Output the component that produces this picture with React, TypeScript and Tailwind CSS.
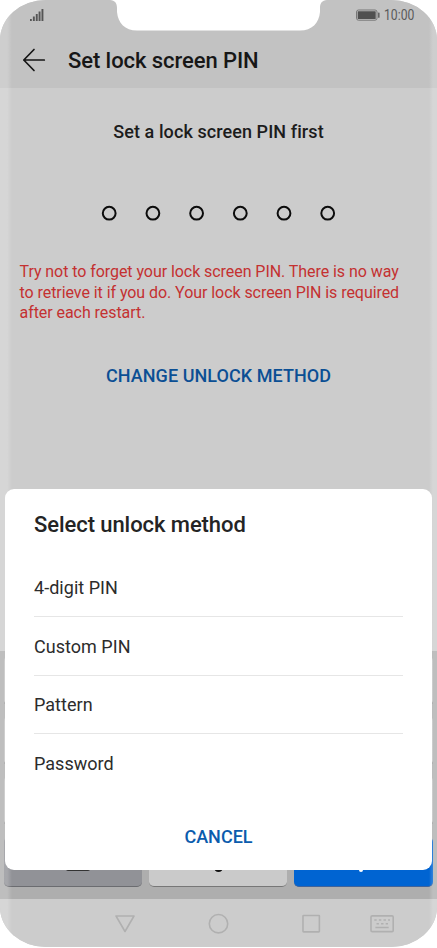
const METHODS = ['4-digit PIN', 'Custom PIN', 'Pattern', 'Password'];

function Notch() {
  return (
    <svg className="absolute left-0 top-0 z-30" width="437" height="40" viewBox="0 0 437 40" fill="#fff">
      <path d="M110 0C115 .4 117 3 117 8V12C118 23 125 30.5 137 30.5H300C312 30.5 319 23 320 12V8C320 3 322 .4 327 0Z" />
    </svg>
  );
}

function StatusBar() {
  return (
    <div className="flex h-[31px] items-start justify-between pl-[30px] pr-[22px]">
      <svg className="mt-[9px]" width="14" height="12" viewBox="0 0 14 12" fill="#555">
        <rect x="0" y="10" width="1.8" height="2" />
        <rect x="2.9" y="7.5" width="1.9" height="4.5" />
        <rect x="5.8" y="5" width="1.9" height="7" />
        <rect x="8.6" y="2.5" width="1.9" height="9.5" />
        <rect x="11.5" y="0" width="1.9" height="12" />
      </svg>
      <div className="flex items-start">
        <svg className="mt-[9px]" width="25" height="13" viewBox="0 0 25 13">
          <rect x=".5" y="1" width="20.5" height="10.2" rx="2" fill="none" stroke="#777" />
          <rect x="1.7" y="2.2" width="18" height="7.8" rx=".6" fill="#505050" />
          <rect x="22" y="3.4" width="1.6" height="5.4" rx=".6" fill="#666" />
        </svg>
        <span className="ml-[3px] mt-[7px] w-[31px] origin-left scale-x-[0.87] whitespace-nowrap text-[14px] leading-[17px] text-[#5a5a5a]">
          10:00
        </span>
      </div>
    </div>
  );
}

function Header() {
  return (
    <header className="h-[88px] shrink-0 bg-[#c2c2c2]">
      <StatusBar />
      <div className="flex h-[57px] items-center pl-[22px] pt-[2px]">
        <svg width="24" height="24" viewBox="0 0 24 24" className="mb-[1px]" fill="none" stroke="#161616" strokeWidth="1.7">
          <path d="M12 1.5L1.8 12L12 22.5M1.8 12H22.3" strokeLinecap="round" strokeLinejoin="round" />
        </svg>
        <h1 className="ml-[22px] whitespace-nowrap text-[22px] font-medium leading-[28px] tracking-[-0.07px] text-[#171717]">
          Set lock screen PIN
        </h1>
      </div>
    </header>
  );
}

function PinDots() {
  return (
    <svg className="mt-[60px]" width="236" height="17" viewBox="0 0 236 17" fill="none" stroke="#0c0c0c" strokeWidth="2">
      {[0, 1, 2, 3, 4, 5].map((digit) => (
        <circle key={digit} cx={8.2 + digit * 43.7} cy="8.2" r="6.4" />
      ))}
    </svg>
  );
}

function Keyboard() {
  return (
    <div className="flex h-[248px] shrink-0 flex-col gap-[12px] bg-[#aeaeae] px-1 pt-[6px]">
      {[0, 1, 2].map((row) => (
        <div key={row} className="grid h-[48px] grid-cols-3 gap-[7px]">
          {[0, 1, 2].map((col) => (
            <div key={col} className="rounded-[4px] border-b border-[#777] bg-[#c2c2c2]" />
          ))}
        </div>
      ))}
      <div className="grid h-[50px] grid-cols-[138px_138px_139px] gap-[7px]">
        <div className="flex items-end justify-center rounded-[5px] border-b border-[#6b6c70] bg-[#919297] pb-[15px] pl-[9px]">
          <div className="h-[5px] w-[24px] rounded-[2px] bg-[#333]" />
        </div>
        <div className="flex items-end justify-center rounded-[5px] border-b border-[#777] bg-[#cacaca] pb-[14px]">
          <div className="size-[9px] rounded-full bg-[#111]" />
        </div>
        <div className="flex items-end justify-center rounded-[5px] border-b border-[#40639a] bg-[#0064d2] pb-[14px] pr-[5px]">
          <div className="size-[4px] rounded-full bg-white" />
        </div>
      </div>
    </div>
  );
}

function NavBar() {
  return (
    <nav className="h-[48px] shrink-0 bg-[#cccccc]">
      <svg width="437" height="48" viewBox="0 0 437 48" fill="none" stroke="#b0b0b0" strokeWidth="1.6" strokeLinejoin="round">
        <path d="M116 17H134L125 32.5Z" />
        <circle cx="218.5" cy="24.7" r="9.2" />
        <rect x="303" y="16.5" width="16.4" height="16.4" rx=".6" />
        <rect x="371" y="16.9" width="22.2" height="15.7" rx="1.2" />
        <path d="M374.3 21H390M376.5 24.7H388" strokeDasharray="2.4 2.2" />
        <path d="M375.4 28.5H388.7" />
      </svg>
    </nav>
  );
}

function UnlockDialog() {
  return (
    <div role="dialog" className="absolute left-[5px] top-[489px] z-20 flex h-[381px] w-[427px] flex-col rounded-[9px] bg-white px-[29px]">
      <h2 className="mt-[22px] whitespace-nowrap text-[22px] font-medium leading-[28px] tracking-[-0.07px] text-[#242424]">
        Select unlock method
      </h2>
      <ul className="mt-[19.5px]">
        {METHODS.map((method) => (
          <li
            key={method}
            className="flex h-[58.6px] items-center border-b border-[#e6e6e6] pt-[1px] text-[18px] tracking-[0.03px] text-[#2c2c2c] last:border-b-0 last:pt-[0.5px]"
          >
            {method}
          </li>
        ))}
      </ul>
      <button className="mt-[31px] self-center text-[18px] font-medium leading-[26px] text-[#0b5cad]">CANCEL</button>
    </div>
  );
}

export default function App() {
  return (
    <div className="h-[948px] w-[437px] bg-white font-['Roboto',sans-serif]">
      <div className="relative flex h-[947px] w-[437px] flex-col overflow-hidden rounded-[46px/40px] bg-[#cccccc]">
        <Header />
        <main className="flex flex-1 flex-col items-center">
          <h2 className="mt-[31px] whitespace-nowrap text-[18px] font-medium leading-[26px] tracking-[0.08px] text-[#1c1c1c]">
            Set a lock screen PIN first
          </h2>
          <PinDots />
          <p className="mt-[40px] w-full whitespace-nowrap pl-[19.5px] text-[16px] leading-[20.7px] tracking-[-0.06px] text-[#c43131]">
            Try not to forget your lock screen PIN. There is no way
            <br />
            to retrieve it if you do. Your lock screen PIN is required
            <br />
            after each restart.
          </p>
          <button className="mt-[39px] whitespace-nowrap text-[18px] font-medium leading-[26px] tracking-[0.05px] text-[#0b4f94]">
            CHANGE UNLOCK METHOD
          </button>
        </main>
        <Keyboard />
        <NavBar />
        <div className="pointer-events-none absolute inset-y-0 left-0 z-10 w-[12px] bg-linear-to-r from-white/20 from-60% to-white/0" />
        <div className="pointer-events-none absolute inset-y-0 right-0 z-10 w-[8px] bg-linear-to-l from-white/20 from-50% to-white/0" />
        <UnlockDialog />
        <Notch />
      </div>
    </div>
  );
}
